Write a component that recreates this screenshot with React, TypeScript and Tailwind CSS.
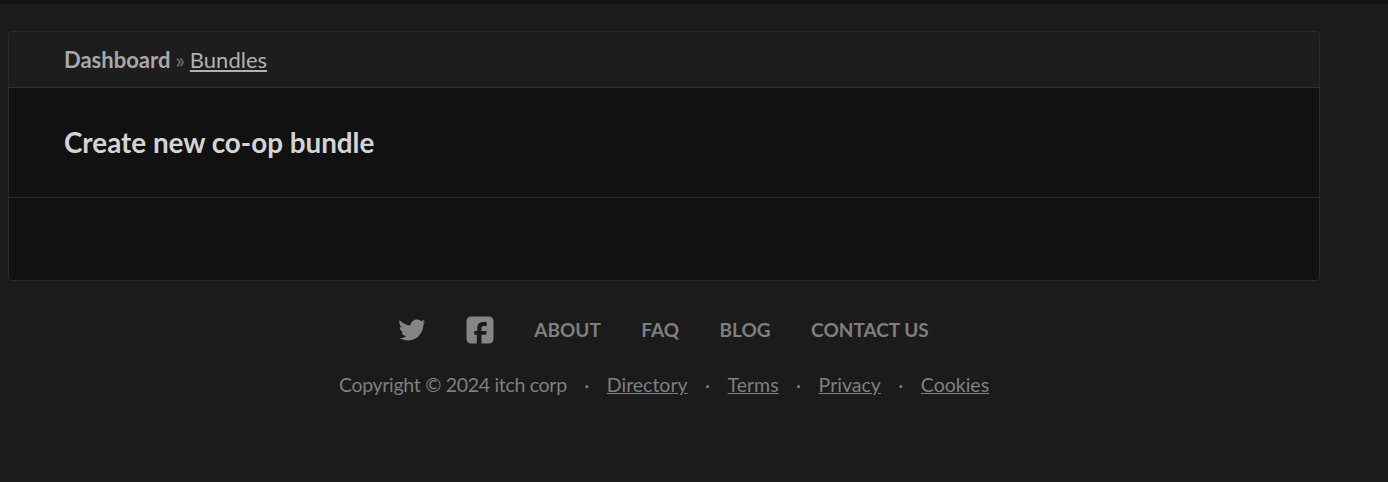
const links = ['Directory', 'Terms', 'Privacy', 'Cookies'];
const navLinks = ['ABOUT', 'FAQ', 'BLOG', 'CONTACT US'];

function TwitterIcon() {
    return (
        <svg viewBox="0 0 26 22" className="w-[26px] h-[22px] mr-[41px] fill-[#858585]">
            <path d="M.5 1C3 3.5 6 6 11.5 6.5 11.5 3 14.5.5 18 .5c1.5 0 3 .5 4 1.5l3.5-1L24 3.6l2-.4L24.500 5c0 8-6 16.500-15 16.500-3.500 0-6.500-1-9-2.500 2.500.3 5-.5 7-2-2.500-.2-4.300-1.500-5-3.500l2-.2C2 12.500.8 10.500.8 8L3 8.600C.8 6.500-.2 3.500.5 1z" />
        </svg>
    );
}

function FacebookIcon() {
    return (
        <svg viewBox="0 0 28 28" className="w-7 h-7 mr-10 fill-[#858585]">
            <path
                fillRule="evenodd"
                d="M5 .5h18A4.500 4.500 0 0 1 27.500 5v18a4.500 4.500 0 0 1-4.500 4.500h-7.500V18.700h4.600l.6-3.700h-5.200v-2.700c0-1.500.6-2.300 2.200-2.300h3V6h-3.600c-3.600 0-5.800 2.300-5.800 5.700V15H8.300v3.700h2.500v8.800H5A4.500 4.500 0 0 1 .5 23V5A4.500 4.500 0 0 1 5 .5z"
            />
        </svg>
    );
}

export default function App() {
    return (
        <div className="min-h-[482px] bg-[#1b1b1b] font-['Lato',sans-serif] overflow-hidden">
            <div className="h-1 bg-[#141414]" />

            {/* Main panel */}
            <div className="w-[1312px] ml-2 mt-[27px] h-[250px] rounded border border-[#2a2a2a] bg-[#111111] overflow-hidden">
                <div className="h-14 bg-[#1d1d1d] border-b border-[#333333] pl-[55px] flex items-center text-[22px] text-[#9b9b9b]">
                    <span className="font-bold text-[#a8a8a8]">Dashboard</span>
                    <span className="mx-[5px] text-[#777777]">»</span>
                    <a className="underline text-[#b0b0b0]">Bundles</a>
                </div>
                <div className="h-[110px] border-b border-[#2b2b2b] pl-[55px] flex items-center">
                    <h2 className="text-[27.8px] font-bold text-[#d4d4d4]">Create new co-op bundle</h2>
                </div>
            </div>

            {/* Footer */}
            <div className="w-[1312px] ml-2 mt-[33px] flex flex-col items-center text-[#7f7f7f]">
                <div className="flex items-center h-8 font-bold text-[19px]">
                    <TwitterIcon />
                    <FacebookIcon />
                    <div className="flex gap-[40.5px]">
                        {navLinks.map((l) => (
                            <a key={l}>{l}</a>
                        ))}
                    </div>
                </div>
                <div className="flex items-center mt-[24px] text-[19.5px]">
                    <span className="tracking-[-0.3px]">Copyright © 2024 itch corp</span>
                    {links.map((l) => (
                        <span key={l} className="flex items-center">
                            <span className="w-10 text-center">·</span>
                            <a className="underline">{l}</a>
                        </span>
                    ))}
                </div>
            </div>
        </div>
    );
}
